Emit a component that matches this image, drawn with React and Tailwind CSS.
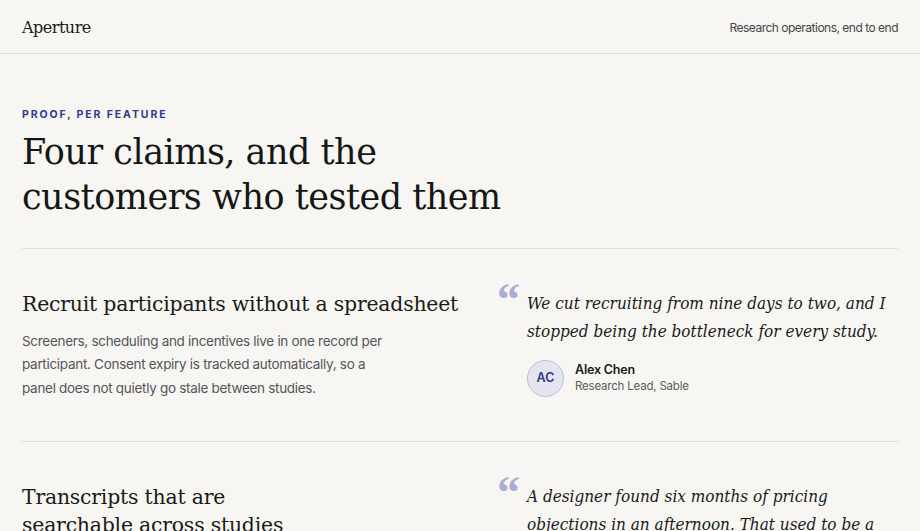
const serif = "font-['DejaVu_Serif',Georgia,serif]"

const features = [
  {
    title: 'Recruit participants without a spreadsheet',
    body: 'Screeners, scheduling and incentives live in one record per participant. Consent expiry is tracked automatically, so a panel does not quietly go stale between studies.',
    quote: 'We cut recruiting from nine days to two, and I stopped being the bottleneck for every study.',
    initials: 'AC',
    name: 'Alex Chen',
    role: 'Research Lead, Sable',
  },
  {
    title: 'Transcripts that are searchable across studies',
    body: 'Every session is transcribed and tagged, so a question asked this quarter can be answered from interviews run last year.',
    quote: 'A designer found six months of pricing objections in an afternoon. That used to be a week of rewatching recordings.',
    initials: 'MO',
    name: 'Maya Okafor',
    role: 'Design Manager, Fieldnote',
  },
]

function FeatureRow({ f }) {
  return (
    <section className="grid grid-cols-[455px_1fr] gap-x-[20px] border-t border-[#e2e0da] pt-[41px] pb-[41px]">
      <div>
        <h2 className={`${serif} text-[20.4px] leading-[28px] text-[#1a1a1a] tracking-[-0.2px] [text-wrap:balance]`}>{f.title}</h2>
        <p className="mt-[12px] max-w-[380px] text-[13.5px] leading-[23.5px] tracking-[-0.3px] text-[#55555a]">{f.body}</p>
      </div>
      <figure className="flex gap-[11px] -mt-[14px]">
        <span className="font-['Liberation_Serif',Georgia,serif] font-bold text-[46px] leading-[52px] text-[#a9aed3] w-[19px] shrink-0 -mt-[2px]">“</span>
        <div className="pt-[13px]">
          <blockquote className={`${serif} [font-stretch:condensed] italic text-[17px] leading-[28px] text-[#1a1a1a]`}>{f.quote}</blockquote>
          <figcaption className="mt-[15px] flex items-center gap-[11px]">
            <div className="w-[37px] h-[37px] rounded-full bg-[#e4e5f1] border border-[#b9bddc] flex items-center justify-center text-[12.5px] font-semibold text-[#2f3a8f]">
              {f.initials}
            </div>
            <div>
              <div className="text-[12.5px] leading-[16px] font-semibold tracking-[-0.2px] text-[#1a1a1a]">{f.name}</div>
              <div className="text-[11.5px] leading-[16px] tracking-[-0.2px] text-[#5b5b60]">{f.role}</div>
            </div>
          </figcaption>
        </div>
      </figure>
    </section>
  )
}

export default function App() {
  return (
    <div className="min-h-screen bg-[#f7f6f2] font-['Inter',sans-serif]">
      <header className="h-[54px] px-[22px] flex items-center justify-between border-b border-[#e2e0da]">
        <span className={`${serif} text-[16px] text-[#1a1a1a] tracking-[-0.5px] pt-[2px]`}>Aperture</span>
        <span className="text-[12px] tracking-[-0.5px] text-[#45454a] pt-[2px]">Research operations, end to end</span>
      </header>
      <main className="px-[22px]">
        <div className="pt-[53px] pb-[28px]">
          <div className="text-[10.5px] font-bold tracking-[1.9px] text-[#2f3a8f]">PROOF, PER FEATURE</div>
          <h1 className={`${serif} mt-[7px] text-[35px] leading-[45px] text-[#161616] tracking-[-0.5px]`}>
            Four claims, and the<br />customers who tested them
          </h1>
        </div>
        {features.map(f => <FeatureRow key={f.title} f={f} />)}
      </main>
    </div>
  )
}
